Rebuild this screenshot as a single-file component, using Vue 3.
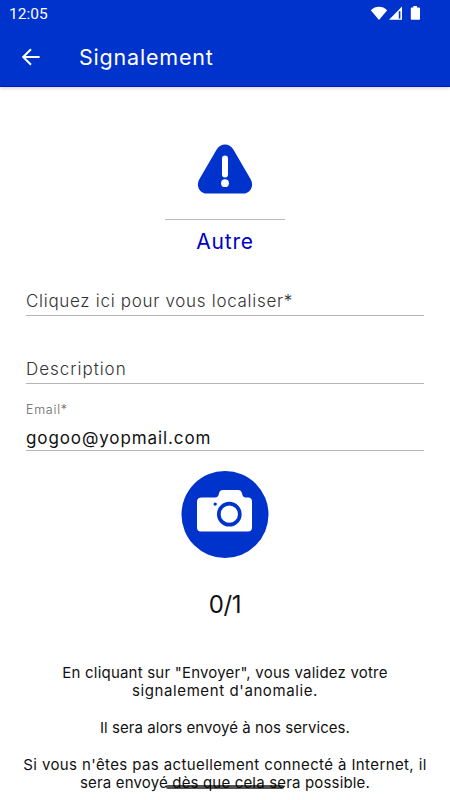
<template>
  <div class="screen">
    <header class="app-header">
      <div class="status-bar">
        <span class="clock">12:05</span>
        <svg class="status-icons" width="52" height="16" viewBox="0 0 52 16">
          <path d="M0.8 5.2C5.5 0.6 12.5 0.6 17.2 5.2L9 15z" fill="#fff" />
          <path d="M32 1.6V14.8H19z" fill="#fff" />
          <path d="M28.8 6.2h1.6v7.4h-1.6z" fill="#0033cc" />
          <path d="M43.4 1h3.6v1.4h2.2q.8 0 .8.8v10.8q0 .8-.8.8h-7.6q-.8 0-.8-.8V3.2q0-.8.8-.8h1.8z" fill="#fff" />
        </svg>
      </div>
      <div class="toolbar">
        <button class="back" type="button" aria-label="Retour">
          <svg width="20" height="20" viewBox="0 0 20 20">
            <path d="M18.6 10H2.5M10 2.2L2.2 10l7.8 7.8" fill="none" stroke="#fff" stroke-width="2" />
          </svg>
        </button>
        <h1 class="title">Signalement</h1>
      </div>
    </header>

    <main class="content">
      <section class="category">
        <svg width="56" height="50" viewBox="0 0 56 50">
          <path
            d="M19.8 5.2C23.5-1.2 32.5-1.2 36.2 5.2L53.8 35.4C57.3 41.8 53.4 49.5 46.2 49.5H9.8C2.6 49.5-1.3 41.8 2.2 35.4z"
            fill="#0033cc"
          />
          <rect x="25" y="11.5" width="6" height="22" rx="3" fill="#fff" />
          <circle cx="28" cy="39.2" r="3.9" fill="#fff" />
        </svg>
        <p class="category-name">Autre</p>
      </section>

      <form class="form">
        <div class="field field-location">
          <span class="placeholder location">Cliquez ici pour vous localiser*</span>
        </div>
        <div class="field field-description">
          <span class="placeholder description">Description</span>
        </div>
        <div class="field field-email">
          <span class="label">Email*</span>
          <span class="value">{{ email }}</span>
        </div>
      </form>

      <button class="photo" type="button" aria-label="Ajouter une photo">
        <svg width="88" height="88" viewBox="0 0.5 88 88">
          <circle cx="44" cy="44" r="43.5" fill="#0033cc" />
          <path
            d="M21 27H34C36.5 27 37.4 25.8 37.8 23.5C38.3 20.6 39.5 19.5 42 19.5H57C59.5 19.5 60.7 20.6 61.2 23.5C61.6 25.8 62.5 27 65 27H67Q71 27 71 31V57Q71 61 67 61H20Q16 61 16 57V31Q16 27 21 27z"
            fill="#fff"
          />
          <circle cx="48.3" cy="43.7" r="10.5" fill="#fff" stroke="#0033cc" stroke-width="3.7" />
          <circle cx="34.2" cy="33.6" r="1.7" fill="#0033cc" />
        </svg>
      </button>
      <p class="counter">{{ photos }}/1</p>

      <section class="notice">
        <p v-for="(lines, i) in notice" :key="i">
          <span v-for="line in lines" :key="line.text" class="line" :style="{ letterSpacing: line.spacing }">{{ line.text }}</span>
        </p>
      </section>
    </main>

    <div class="home-indicator"></div>
  </div>
</template>

<script setup>
import { ref } from 'vue'

const email = ref('gogoo@yopmail.com')
const photos = ref(0)

const notice = [
  [
    { text: 'En cliquant sur "Envoyer", vous validez votre', spacing: '0.21px' },
    { text: "signalement d'anomalie.", spacing: '0.6px' }
  ],
  [{ text: 'Il sera alors envoyé à nos services.', spacing: '0.06px' }],
  [
    { text: "Si vous n'êtes pas actuellement connecté à Internet, il", spacing: '0.39px' },
    { text: 'sera envoyé dès que cela sera possible.', spacing: '0.17px' }
  ]
]
</script>

<style>
body {
  margin: 0;
  background: #fff;
}
</style>

<style scoped>
.screen {
  position: relative;
  width: 450px;
  height: 800px;
  overflow: hidden;
  background: #fff;
  color: #111;
  font-family: Inter, 'Open Sans', sans-serif;
}

p,
h1 {
  margin: 0;
}

button {
  padding: 0;
  border: 0;
  background: none;
}

svg {
  display: block;
}

.app-header {
  height: 87px;
  box-sizing: border-box;
  border-bottom: 1px solid #0019c0;
  background: #0033cc;
  box-shadow: 0 1px 4px rgba(0, 0, 0, 0.2);
  color: #fff;
}

.status-bar {
  display: flex;
  justify-content: space-between;
  height: 28px;
  padding: 5px 28px 0 9px;
  box-sizing: border-box;
}

.clock {
  font: 400 15.5px/18px Roboto, sans-serif;
}

.toolbar {
  display: flex;
  align-items: center;
  height: 58px;
  padding-left: 21px;
}

.back {
  width: 20px;
  margin-right: 38px;
}

.title {
  font-size: 21.5px;
  font-weight: 400;
  line-height: 28px;
  letter-spacing: 0.8px;
}

.category {
  display: flex;
  flex-direction: column;
  align-items: center;
  padding-top: 57px;
}

.category-name {
  width: 120px;
  margin-top: 25px;
  padding-top: 8px;
  border-top: 1px solid #bbb;
  color: #0000c8;
  font-size: 21px;
  line-height: 28px;
  text-align: center;
  letter-spacing: 0.8px;
}

.form {
  margin: 0 26px;
}

.field {
  display: flex;
  flex-direction: column;
  justify-content: flex-end;
  box-sizing: border-box;
  border-bottom: 1px solid #b4b4b4;
  white-space: nowrap;
}

.field-location {
  height: 60px;
  padding-bottom: 3px;
}

.field-description {
  height: 68px;
  padding-bottom: 3px;
}

.field-email {
  height: 67px;
  padding-bottom: 1px;
}

.placeholder {
  color: #333;
  font-size: 17px;
  font-weight: 300;
  line-height: 22px;
  letter-spacing: 0.7px;
}

.description {
  letter-spacing: 0.97px;
}

.label {
  color: #666;
  font-size: 12.5px;
  font-weight: 300;
  line-height: 16px;
  letter-spacing: 0.75px;
}

.value {
  margin-top: 9px;
  font-size: 17px;
  line-height: 22px;
  letter-spacing: 0.9px;
}

.photo {
  display: block;
  margin: 20px auto 0;
}

.counter {
  margin-top: 30px;
  font-size: 24px;
  line-height: 32px;
  text-align: center;
  letter-spacing: -0.4px;
}

.notice {
  margin-top: 43px;
  font-size: 15px;
  line-height: 18.4px;
  text-align: center;
  white-space: nowrap;
}

.notice p + p {
  margin-top: 18.4px;
}

.line {
  display: block;
}

/* system gesture bar drawn over the page */
.home-indicator {
  position: absolute;
  left: 166px;
  bottom: 11px;
  width: 118px;
  height: 4px;
  border-radius: 2px;
  background: rgba(0, 0, 0, 0.68);
}
</style>
